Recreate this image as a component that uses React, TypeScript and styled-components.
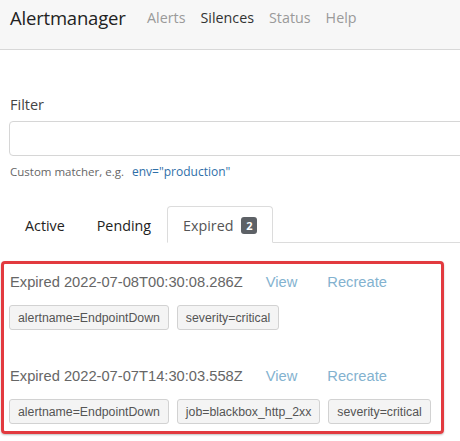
import React from "react";
import styled, { createGlobalStyle } from "styled-components";

const Global = createGlobalStyle`
  html, body { margin: 0; padding: 0; background: #fff; overflow: hidden; }
  body { font-family: "Open Sans", "Noto Sans", sans-serif; color: #333; }
`;

const Navbar = styled.nav`
  height: 50px;
  background: #f7f7f7;
  border-bottom: 1px solid #d8d8d8;
  display: flex;
  align-items: center;
  padding: 0 0 14px 10px;
  box-sizing: border-box;
`;

const Brand = styled.span`
  font-size: 18.5px;
  color: #222;
  margin-right: 14px;
  letter-spacing: -0.2px;
`;

const NavLink = styled.a<{ $active?: boolean }>`
  font-size: 14.3px;
  color: ${(p) => (p.$active ? "#333" : "#9a9a9a")};
  padding: 0 7.5px;
  text-decoration: none;
`;

const Main = styled.main`
  overflow: hidden;
  padding: 0 0 10px 9px;
`;

const FilterLabel = styled.div`
  margin-top: 43px;
  font-size: 14.5px;
  line-height: 24px;
  color: #444;
  padding-left: 1px;
`;

const Input = styled.input`
  display: block;
  box-sizing: border-box;
  width: calc(100% + 40px);
  height: 35px;
  margin-top: 4px;
  border: 1px solid #d6d6d6;
  border-radius: 4px;
  outline: none;
`;

const Help = styled.div`
  margin-top: 7px;
  font-size: 11.5px;
  line-height: 18px;
  color: #666;
  padding-left: 1px;
  display: flex;
  gap: 8px;
`;

const HelpLink = styled.span`
  color: #2f6fa8;
  font-size: 12px;
`;

const Tabs = styled.ul`
  list-style: none;
  margin: 25px 0 0;
  padding: 0;
  display: flex;
  border-bottom: 1px solid #dcdcdc;
  height: 36px;
`;

const Tab = styled.li<{ $active?: boolean }>`
  box-sizing: border-box;
  height: 37px;
  padding: 2px 15px 0 15px;
  border: 1px solid ${(p) => (p.$active ? "#dcdcdc" : "transparent")};
  border-bottom-color: ${(p) => (p.$active ? "#fff" : "transparent")};
  border-radius: 4px 4px 0 0;
  background: #fff;
  display: flex;
  align-items: center;
  gap: 8px;
  font-size: 14.3px;
  color: ${(p) => (p.$active ? "#555" : "#222")};
`;

const Badge = styled.span`
  display: inline-flex;
  align-items: center;
  justify-content: center;
  width: 16px;
  height: 17px;
  border-radius: 3px;
  background: #5d6166;
  color: #fff;
  font-size: 11px;
  font-weight: 700;
`;

const List = styled.div`
  margin: 18px 0 0 -8px;
  width: 443px;
  box-sizing: border-box;
  border: 3px solid #e23a3f;
  border-radius: 4px;
  padding: 7px 5px 7px;
  box-shadow: 0 1px 2px rgba(0, 0, 0, 0.25);
`;

const Silence = styled.div<{ $first?: boolean }>`
  margin-top: ${(p) => (p.$first ? "0" : "35px")};
`;

const Head = styled.div`
  display: flex;
  align-items: center;
  height: 22px;
  font-family: "Liberation Sans", Arial, sans-serif;
  font-size: 14.7px;
  color: #666;
  padding-left: 1px;
`;

const Action = styled.a<{ $gap: number }>`
  margin-left: ${(p) => p.$gap}px;
  color: #83b2cf;
  text-decoration: none;
`;

const Labels = styled.div`
  display: flex;
  gap: 8px;
  margin-top: 12px;
`;

const Label = styled.span`
  box-sizing: border-box;
  height: 25px;
  display: inline-flex;
  align-items: center;
  padding: 0 8px;
  border: 1px solid #d2d2d2;
  border-radius: 3px;
  background: #f4f4f4;
  font-family: "Liberation Sans", Arial, sans-serif;
  font-size: 12.3px;
  color: #555;
`;

const silences = [
  {
    time: "2022-07-08T00:30:08.286Z",
    labels: ["alertname=EndpointDown", "severity=critical"],
  },
  {
    time: "2022-07-07T14:30:03.558Z",
    labels: ["alertname=EndpointDown", "job=blackbox_http_2xx", "severity=critical"],
  },
];

export default function App() {
  return (
    <>
      <Global />
      <Navbar>
        <Brand>Alertmanager</Brand>
        <NavLink>Alerts</NavLink>
        <NavLink $active>Silences</NavLink>
        <NavLink>Status</NavLink>
        <NavLink>Help</NavLink>
      </Navbar>
      <Main>
        <FilterLabel>Filter</FilterLabel>
        <Input />
        <Help>
          <span>Custom matcher, e.g.</span>
          <HelpLink>env="production"</HelpLink>
        </Help>
        <Tabs>
          <Tab>Active</Tab>
          <Tab>Pending</Tab>
          <Tab $active>
            Expired <Badge>2</Badge>
          </Tab>
        </Tabs>
        <List>
          {silences.map((s, i) => (
            <Silence key={s.time} $first={i === 0}>
              <Head>
                Expired {s.time}
                <Action $gap={23}>View</Action>
                <Action $gap={30}>Recreate</Action>
              </Head>
              <Labels>
                {s.labels.map((l) => (
                  <Label key={l}>{l}</Label>
                ))}
              </Labels>
            </Silence>
          ))}
        </List>
      </Main>
    </>
  );
}
